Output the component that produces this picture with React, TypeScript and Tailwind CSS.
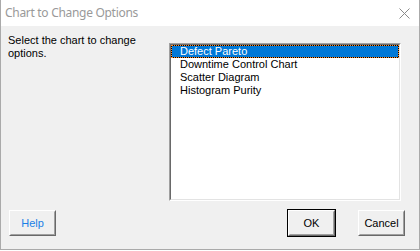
const items = ["Defect Pareto", "Downtime Control Chart", "Scatter Diagram", "Histogram Purity"];

function Button({ label, primary, blue }: { label: string; primary?: boolean; blue?: boolean }) {
  return (
    <div className={primary ? "border border-black" : "border border-transparent"}>
      <div className="border border-t-white border-l-white border-r-[#696969] border-b-[#696969]">
        <div
          className={`flex h-[24px] w-[45px] items-center justify-center border border-t-[#f0f0f0] border-l-[#f0f0f0] border-r-[#a0a0a0] border-b-[#a0a0a0] bg-[#f0f0f0] text-[11px] ${
            blue ? "text-[#1a7fe6]" : "text-black"
          }`}
        >
          {label}
        </div>
      </div>
    </div>
  );
}

export default function App() {
  return (
    <div className="flex h-[250px] w-[420px] flex-col border-x border-b border-[#aaaaaa] bg-[#f0f0f0] font-['Liberation_Sans',Arial,sans-serif]">
      <div className="flex h-[26px] shrink-0 items-center justify-between bg-white pl-[4px] pr-[9px]">
        <span className="font-['Noto_Sans',sans-serif] text-[12px] tracking-[-0.3px] text-[#999999]">Chart to Change Options</span>
        <svg width="11" height="11" viewBox="0 0 11 11" className="mt-[1px]">
          <path d="M0.5 0.5 L10.5 10.5 M10.5 0.5 L0.5 10.5" stroke="#8a8a8a" strokeWidth="1" />
        </svg>
      </div>

      <div className="flex pl-[7px] pt-[8px]">
        <p className="w-[154px] text-[11px] leading-[13px] text-black">Select the chart to change options.</p>
        <div className="ml-[7px] mt-[9px] h-[158px] w-[232px] border border-t-[#a0a0a0] border-l-[#a0a0a0] border-r-white border-b-white">
          <div className="h-full border border-t-[#696969] border-l-[#696969] border-r-[#e3e3e3] border-b-[#e3e3e3] bg-white">
            {items.map((item, i) =>
              i === 0 ? (
                <div key={item} className="bg-black">
                  <div className="h-[13px] border border-dotted border-[#ff8a28] bg-[#0078d7] bg-clip-padding pl-[8px] text-[11px] leading-[11px] text-white">
                    {item}
                  </div>
                </div>
              ) : (
                <div key={item} className="h-[13px] pl-[9px] text-[11px] leading-[13px] text-black">
                  {item}
                </div>
              )
            )}
          </div>
        </div>
      </div>

      <div className="mt-[8px] flex items-center pl-[7px]">
        <Button label="Help" blue />
        <div className="ml-[230px]">
          <Button label="OK" primary />
        </div>
        <div className="ml-[21px]">
          <Button label="Cancel" />
        </div>
      </div>
    </div>
  );
}
